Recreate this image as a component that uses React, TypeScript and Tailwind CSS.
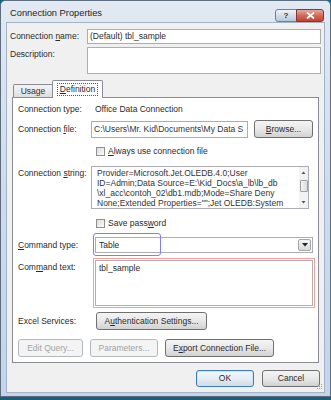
import React from "react";

const U = ({ children }: { children: React.ReactNode }) => (
  <span className="underline underline-offset-[1px]">{children}</span>
);

const Btn = ({
  w,
  h = "h-[18px]",
  disabled,
  primary,
  children,
}: {
  w: string;
  h?: string;
  disabled?: boolean;
  primary?: boolean;
  children: React.ReactNode;
}) => {
  let cls = "border-[#707070] bg-gradient-to-b from-[#f4f4f4] via-[#e8e8e8] to-[#d2d2d2] text-[#2a2a2a]";
  if (disabled) cls = "border-[#b5b9bd] bg-[#f4f4f4] text-[#a3a3a3]";
  if (primary) cls = "border-[#3c7fb1] bg-gradient-to-b from-[#f2f6f9] via-[#e7eef4] to-[#cfdbe6] text-[#2a2a2a] shadow-[inset_0_0_0_1px_#c8e6f8]";
  return (
    <div className={`${w} ${h} ${cls} flex shrink-0 items-center justify-center rounded-[3px] border`}>
      <span className="leading-none">{children}</span>
    </div>
  );
};

const Check = ({ children }: { children: React.ReactNode }) => (
  <div className="flex h-[10px] items-center gap-[3px]">
    <div className="h-[9px] w-[9px] border border-[#8f8f8f] bg-gradient-to-br from-[#dcdcdc] to-[#fbfbfb]" />
    <span className="leading-none">{children}</span>
  </div>
);

export default function App() {
  return (
    <div className="h-[400px] w-[331px] overflow-hidden bg-[#17607a] font-['Liberation_Sans',Arial,sans-serif] text-[8.5px] text-[#2a2a2a]">
      <div className="flex h-[397px] flex-col rounded-t-[5px] border border-[#5d6d80] bg-gradient-to-b from-[#e2e9f2] via-[#cddbec] to-[#c3d5ec] px-[5px] pb-[3px]">
        {/* title bar */}
        <div className="flex h-[21px] shrink-0 items-start">
          <div className="pl-[4px] pt-[8px] text-[9.3px] leading-none text-[#1e1e1e]">Connection Properties</div>
          <div className="ml-auto mr-[1px] mt-[8px] flex">
            <div className="flex h-[13px] w-[22px] items-center justify-center rounded-l-[3px] border border-[#6e8096] bg-gradient-to-b from-[#eef3f8] via-[#d3dde9] to-[#b8c8dc] text-[8px] font-bold leading-none text-[#333]">
              ?
            </div>
            <div className="-ml-px flex h-[13px] w-[28px] items-center justify-center rounded-r-[3px] border border-[#7e3a31] bg-gradient-to-b from-[#e9a699] via-[#d36a5a] to-[#c04434]">
              <svg width="9" height="7" viewBox="0 0 9 7">
                <path d="M1 0.5 L8 6.5 M8 0.5 L1 6.5" stroke="#fff" strokeWidth="1.8" />
              </svg>
            </div>
          </div>
        </div>

        {/* content */}
        <div className="relative flex flex-1 flex-col border border-[#a3b3c6] bg-[#f0f0f0]">
          <div className="mt-[6px] flex items-center pr-[3px]">
            <div className="w-[80px] pl-[3px]">
              Connection <U>n</U>ame:
            </div>
            <div className="flex h-[15px] flex-1 items-center border border-[#abadb3] bg-white px-[2px]">(Default) tbl_sample</div>
          </div>
          <div className="mt-[3px] flex items-start pr-[3px]">
            <div className="w-[80px] pl-[3px] pt-[1px]">Description:</div>
            <div className="h-[27px] flex-1 border border-[#abadb3] bg-white" />
          </div>

          {/* tabs */}
          <div className="mx-[5px] mt-[6px] flex flex-col">
            <div className="flex items-end pl-[1px]">
              <div className="flex h-[13px] w-[40px] items-center justify-center rounded-t-[2px] border border-b-0 border-[#898c95] bg-gradient-to-b from-[#f4f4f4] to-[#dedede] text-[#333]">
                Usa<U>g</U>e
              </div>
              <div className="relative z-10 -mb-px -ml-px flex h-[18px] w-[51px] items-center justify-center rounded-t-[2px] border border-b-0 border-[#898c95] bg-white">
                <span className="border border-dotted border-[#555] px-[2px] py-[1px] leading-none">
                  <U>D</U>efinition
                </span>
              </div>
            </div>
            <div className="flex h-[266px] flex-col border border-[#898c95] bg-white pl-[5px]">
              <div className="mt-[6px] flex h-[10px] items-center">
                <div className="w-[73px]">Connection type:</div>
                <div className="ml-[4px]">Office Data Connection</div>
              </div>
              <div className="mt-[6px] flex items-center">
                <div className="w-[73px]">
                  Connection <U>f</U>ile:
                </div>
                <div className="flex h-[17px] w-[157px] items-center overflow-hidden whitespace-nowrap border border-[#abadb3] bg-white pl-[2px] text-[#333]">
                  C:\Users\Mr. Kid\Documents\My Data S
                </div>
                <div className="ml-[6px]">
                  <Btn w="w-[59px]">
                    <U>B</U>rowse...
                  </Btn>
                </div>
              </div>
              <div className="ml-[78px] mt-[8px]">
                <Check>
                  <U>A</U>lways use connection file
                </Check>
              </div>
              <div className="mt-[10px] flex items-start">
                <div className="w-[73px] pt-[1px]">
                  Connection <U>s</U>tring:
                </div>
                <div className="flex h-[43px] w-[218px] border border-[#abadb3] bg-white">
                  <div className="flex-1 overflow-hidden whitespace-nowrap pl-[5px] pt-[1px] leading-[10px] text-[#333]">
                    <div>Provider=Microsoft.Jet.OLEDB.4.0;User</div>
                    <div>ID=Admin;Data Source=E:\Kid_Docs\a_lb\lb_db</div>
                    <div>\xl_acc\contoh_02\db1.mdb;Mode=Share Deny</div>
                    <div>None;Extended Properties="";Jet OLEDB:System</div>
                  </div>
                  <div className="flex w-[9px] flex-col items-center bg-[#f2f2f2]">
                    <svg width="5" height="9" viewBox="0 0 5 9" className="mt-[1px]">
                      <path d="M0.5 6 L2.5 3.5 L4.5 6 Z" fill="#555" />
                    </svg>
                    <div className="mt-[3px] h-[12px] w-[8px] rounded-[1px] border border-[#a0a0a0] bg-gradient-to-r from-[#f4f4f4] to-[#dcdcdc]" />
                    <svg width="5" height="9" viewBox="0 0 5 9" className="mt-auto mb-[1px]">
                      <path d="M0.5 3 L2.5 5.5 L4.5 3 Z" fill="#555" />
                    </svg>
                  </div>
                </div>
              </div>
              <div className="ml-[78px] mt-[9px]">
                <Check>
                  Save pass<U>w</U>ord
                </Check>
              </div>
              <div className="mt-[9px] flex items-center">
                <div className="w-[73px]">
                  <U>C</U>ommand type:
                </div>
                <div className="relative ml-[4px] flex h-[16px] w-[218px] items-center border border-[#abadb3] bg-white">
                  <span className="pl-[3px]">Table</span>
                  <div className="ml-auto mr-px flex h-[12px] w-[13px] items-center justify-center rounded-[2px] border border-[#a5a5a5] bg-gradient-to-b from-[#f4f4f4] to-[#d9d9d9]">
                    <svg width="6" height="4" viewBox="0 0 6 4">
                      <path d="M0 0 L6 0 L3 3.5 Z" fill="#222" />
                    </svg>
                  </div>
                  <div className="absolute left-[-3px] top-[-5px] h-[23px] w-[68px] rounded-[3px] border border-[#7f7ff2]" />
                </div>
              </div>
              <div className="mt-[5px] flex items-start">
                <div className="w-[73px] pt-[3px]">
                  Com<U>m</U>and text:
                </div>
                <div className="ml-[2px] h-[50px] w-[222px] border border-[#f3a0a0] p-px">
                  <div className="h-full border border-[#b0b0b0] bg-white pl-[3px] pt-[3px] leading-none">tbl_sample</div>
                </div>
              </div>
              <div className="mt-[4px] flex items-center">
                <div className="w-[73px]">Excel Services:</div>
                <div className="ml-[5px]">
                  <Btn w="w-[111px]">
                    A<U>u</U>thentication Settings...
                  </Btn>
                </div>
              </div>
              <div className="mt-[9px] flex gap-[7px]">
                <Btn w="w-[65px]" disabled>
                  Edit Query...
                </Btn>
                <Btn w="w-[68px]" disabled>
                  Parameters...
                </Btn>
                <Btn w="w-[109px]">
                  E<U>x</U>port Connection File...
                </Btn>
              </div>
            </div>
          </div>

          <div className="mt-[7px] flex justify-end gap-[8px] pr-[4px]">
            <Btn w="w-[58px]" h="h-[17px]" primary>
              OK
            </Btn>
            <Btn w="w-[58px]" h="h-[17px]">
              Cancel
            </Btn>
          </div>

          {/* size grip */}
          <svg width="8" height="8" viewBox="0 0 8 8" className="absolute bottom-px right-px">
            <g fill="#9aa3ad">
              <rect x="6" y="1" width="1" height="1" />
              <rect x="4" y="3" width="1" height="1" />
              <rect x="6" y="3" width="1" height="1" />
              <rect x="2" y="5" width="1" height="1" />
              <rect x="4" y="5" width="1" height="1" />
              <rect x="6" y="5" width="1" height="1" />
            </g>
          </svg>
        </div>
      </div>
    </div>
  );
}
